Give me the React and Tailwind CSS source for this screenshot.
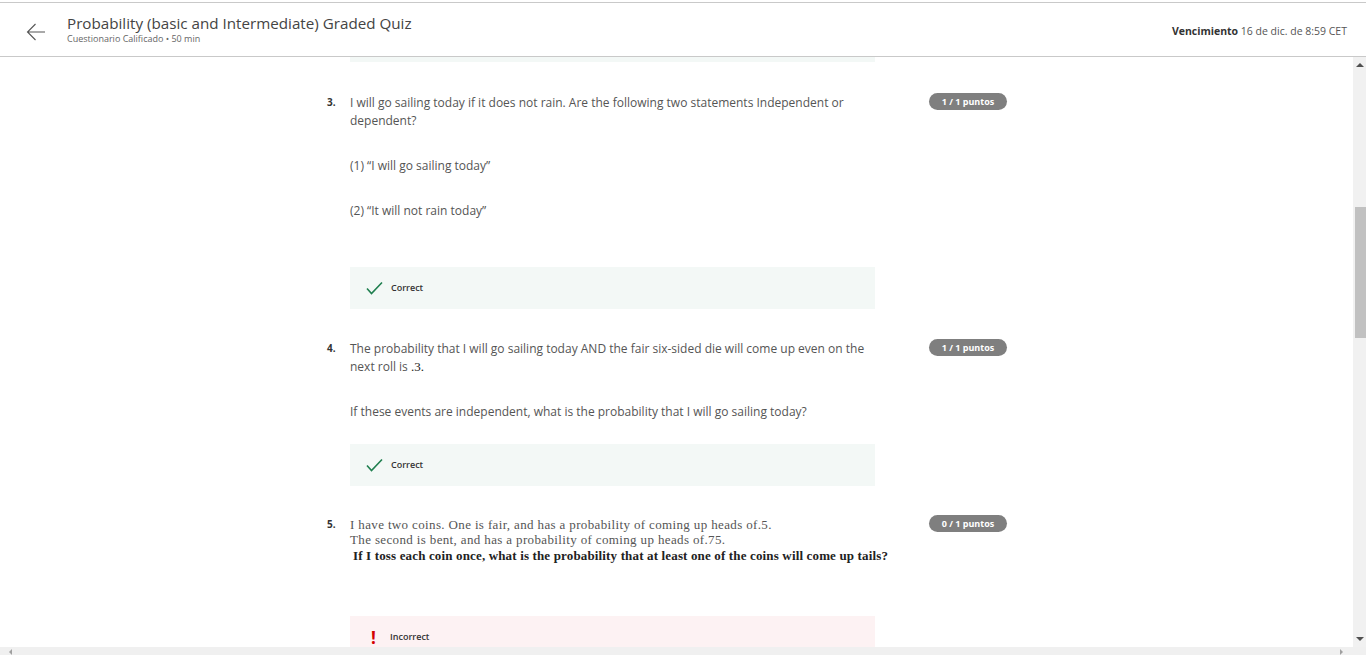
import React from 'react';

// Graded quiz review page
function Badge({ children }) {
  return (
    <div className="w-[78px] h-[17px] rounded-full bg-[#7f7f7f] text-white text-[9px] font-bold flex items-center justify-center shrink-0">
      {children}
    </div>
  );
}

function CheckIcon() {
  return (
    <svg width="17" height="14" viewBox="0 0 17 14" fill="none">
      <path d="M1 7.5 L5.5 12.5 L16 1.5" stroke="#1f7f4f" strokeWidth="1.6" />
    </svg>
  );
}

function Feedback({ ok }) {
  return (
    <div className={`h-[42px] flex items-center ${ok ? 'bg-[#f3f8f6] pl-[16px]' : 'bg-[#fdf2f3] pl-[21px]'}`}>
      {ok ? (
        <CheckIcon />
      ) : (
        <span className="text-[#d40000] text-[17px] font-bold leading-none w-[12px]">!</span>
      )}
      <span className={`text-[9px] font-semibold text-[#333] ${ok ? 'ml-[8px]' : 'ml-[7px]'}`}>
        {ok ? 'Correct' : 'Incorrect'}
      </span>
    </div>
  );
}

function Question({ num, points, children, feedback, feedbackGap }) {
  return (
    <div className="flex">
      <div className="w-[23px] text-[10px] font-bold text-[#333] leading-[18px]">{num}.</div>
      <div className="w-[525px]">
        {children}
        <div style={{ marginTop: feedbackGap }}>{feedback}</div>
      </div>
      <div className="ml-[54px]">
        <Badge>{points}</Badge>
      </div>
    </div>
  );
}

export default function App() {
  return (
    <div className="h-[655px] flex flex-col bg-white overflow-hidden font-['Open_Sans',sans-serif] text-[#555]">
      <div className="h-[2px] bg-white" />
      <header className="h-[55px] border-t border-b border-[#c9c9c9] flex items-center shrink-0">
        <div className="w-[67px] pl-[26px] flex items-center pt-[4px]">
          <svg width="20" height="18" viewBox="0 0 20 18" fill="none">
            <path d="M19 9 H1.5 M9.5 1 L1.5 9 L9.5 17" stroke="#555" strokeWidth="1.1" />
          </svg>
        </div>
        <div className="flex-1 -mt-[2px]">
          <div className="text-[15.2px] text-[#444] leading-[20px]">Probability (basic and Intermediate) Graded Quiz</div>
          <div className="text-[9px] text-[#666] leading-[12px]">Cuestionario Calificado • 50 min</div>
        </div>
        <div className="pr-[19px] text-[10.5px] text-[#555] pt-[4px]">
          <span className="font-bold text-[#333]">Vencimiento</span> 16 de dic. de 8:59 CET
        </div>
      </header>

      <div className="flex-1 flex min-h-0">
        <div className="flex-1 overflow-hidden">
          <div className="ml-[350px] w-[525px] h-[5px] bg-[#f3f8f6]" />
          <div className="ml-[327px] mt-[31px] text-[12px] leading-[18px]">
            <Question
              num={3}
              points="1 / 1 puntos"
              feedbackGap="47px"
              feedback={<Feedback ok />}
            >
              <div className="pt-[1px]">
                <p>I will go sailing today if it does not rain. Are the following two statements Independent or dependent?</p>
                <p className="mt-[27px]">(1) “I will go sailing today”</p>
                <p className="mt-[27px]">(2) “It will not rain today”</p>
              </div>
            </Question>

            <div className="h-[30px]" />
            <Question
              num={4}
              points="1 / 1 puntos"
              feedbackGap="23px"
              feedback={<Feedback ok />}
            >
              <div className="pt-[1px]">
                <p>
                  The probability that I will go sailing today AND the fair six-sided die will come up even on the next roll is{' '}
                  <span className="font-['Liberation_Serif',serif] text-[13px] text-[#222]">.3.</span>
                </p>
                <p className="mt-[27px]">If these events are independent, what is the probability that I will go sailing today?</p>
              </div>
            </Question>

            <div className="h-[29px]" />
            <Question
              num={5}
              points="0 / 1 puntos"
              feedbackGap="51px"
              feedback={<Feedback ok={false} />}
            >
              <div className="font-['Liberation_Serif',serif] text-[13px] tracking-[0.36px] leading-[15px] text-[#555] pt-[2px] whitespace-nowrap">
                <p>I have two coins. One is fair, and has a probability of coming up heads of.5.</p>
                <p>The second is bent, and has a probability of coming up heads of.75.</p>
                <p className="ml-[3px] font-bold text-[13px] tracking-[0.15px] leading-[18px] text-[#222]">
                  If I toss each coin once, what is the probability that at least one of the coins will come up tails?
                </p>
              </div>
            </Question>
          </div>
        </div>

        {/* vertical scrollbar */}
        <div className="w-[13px] bg-[#f1f1f1] flex flex-col items-center shrink-0">
          <div className="h-[16px] flex items-center justify-center">
            <div className="w-0 h-0 border-l-[4px] border-r-[4px] border-b-[4px] border-l-transparent border-r-transparent border-b-[#505050]" />
          </div>
          <div className="mt-[134px] w-[11px] ml-[2px] h-[131px] bg-[#c1c1c1]" />
          <div className="flex-1" />
          <div className="h-[16px] flex items-center justify-center">
            <div className="w-0 h-0 border-l-[4px] border-r-[4px] border-t-[4px] border-l-transparent border-r-transparent border-t-[#505050]" />
          </div>
        </div>
      </div>

      {/* horizontal scrollbar */}
      <div className="h-[8px] bg-[#f0f0f0] shrink-0 flex justify-between items-end px-[9px]">
        <div className="w-0 h-0 border-t-[3px] border-b-[3px] border-r-[3px] border-t-transparent border-b-transparent border-r-[#a0a0a0]" />
        <div className="w-0 h-0 border-t-[3px] border-b-[3px] border-l-[3px] border-t-transparent border-b-transparent border-l-[#a0a0a0] mr-[14px]" />
      </div>
    </div>
  );
}
